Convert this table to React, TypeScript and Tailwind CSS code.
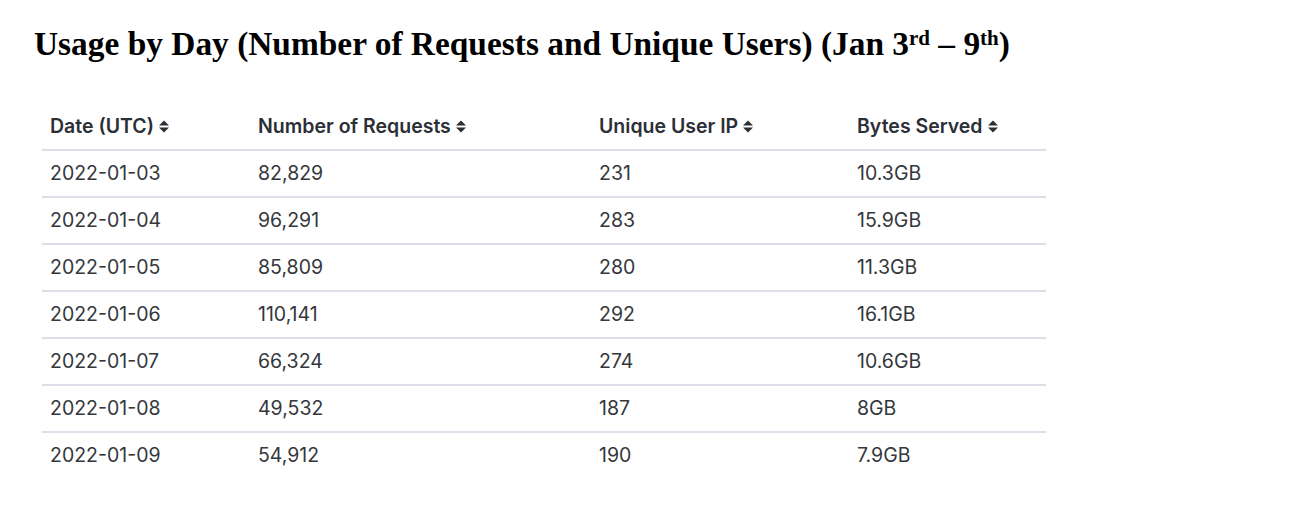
const rows = [
  ['2022-01-03', '82,829', '231', '10.3GB'],
  ['2022-01-04', '96,291', '283', '15.9GB'],
  ['2022-01-05', '85,809', '280', '11.3GB'],
  ['2022-01-06', '110,141', '292', '16.1GB'],
  ['2022-01-07', '66,324', '274', '10.6GB'],
  ['2022-01-08', '49,532', '187', '8GB'],
  ['2022-01-09', '54,912', '190', '7.9GB'],
];

const headers = ['Date (UTC)', 'Number of Requests', 'Unique User IP', 'Bytes Served'];
const widths = ['w-[208px]', 'w-[341px]', 'w-[258px]', 'w-[197px]'];

const SortIcon = () => (
  <svg width="12" height="15" viewBox="0 0 12 15" className="ml-[4px] shrink-0">
    <path d="M6 1.5 L11 6.5 H1 Z" fill="currentColor" />
    <path d="M6 13.5 L11 8.5 H1 Z" fill="currentColor" />
  </svg>
);

export default function App() {
  return (
    <div className="w-[1292px] h-[510px] bg-white">
      <h1 className="pl-[34px] pt-[22px] font-['Liberation_Serif',serif] text-[33.4px] font-bold leading-[44px] text-black">
        Usage by Day (Number of Requests and Unique Users) (Jan 3
        <sup className="text-[21px]">rd</sup> – 9<sup className="text-[21px]">th</sup>)
      </h1>

      <table className="ml-[42px] mt-[38px] border-collapse font-['Inter',sans-serif] text-[19.5px]">
        <thead>
          <tr className="border-b-2 border-[#dcdfea]">
            {headers.map((h, i) => (
              <th key={h} className={`${widths[i]} h-[46px] px-[8px] text-left align-middle font-semibold text-[#2b2f36]`}>
                <span className="inline-flex items-center">
                  {h}
                  <SortIcon />
                </span>
              </th>
            ))}
          </tr>
        </thead>
        <tbody>
          {rows.map((r, ri) => (
            <tr key={r[0]} className={ri < rows.length - 1 ? 'border-b-2 border-[#dcdfea]' : ''}>
              {r.map((c, ci) => (
                <td key={ci} className={`${widths[ci]} h-[47px] px-[8px] align-middle text-[#34373c]`}>
                  {c}
                </td>
              ))}
            </tr>
          ))}
        </tbody>
      </table>
    </div>
  );
}
